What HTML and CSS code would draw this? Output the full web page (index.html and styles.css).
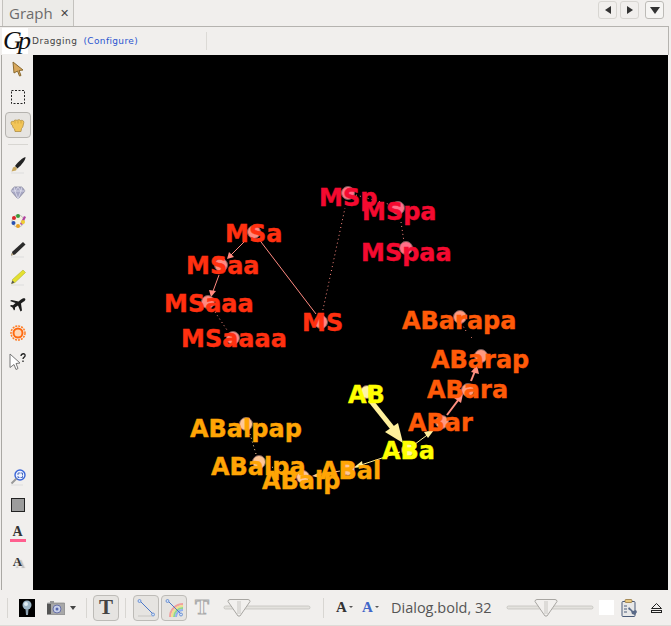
FILE: index.html

```html
<!DOCTYPE html>
<html>
<head>
    <title>Graph</title>
    <meta charset="UTF-8">
    <link rel="stylesheet" href="styles.css">
</head>
<body>
    <div class="tabbar">
        <div class="tab"><span class="tab-title">Graph</span><span class="tab-close">✕</span></div>
        <div class="tab-nav">
            <span class="nav-btn"><svg width="8" height="8" viewBox="0 0 8 8"><path d="M7 0v8L1 4z" fill="#333"/></svg></span>
            <span class="nav-btn"><svg width="8" height="8" viewBox="0 0 8 8"><path d="M1 0v8l6-4z" fill="#333"/></svg></span>
            <span class="nav-btn nav-menu"><svg width="10" height="8" viewBox="0 0 10 8"><path d="M0 1h10L5 8z" fill="#333"/></svg></span>
        </div>
    </div>

    <div class="infobar">
        <div class="logo">Gp</div>
        <span class="mode">Dragging</span>
        <a class="configure">(Configure)</a>
        <span class="infobar-sep"></span>
    </div>

    <div class="main">
        <div class="side">
            <span class="tool"><svg width="14" height="16" viewBox="0 0 14 16"><path d="M2 1l10 8-4 .5 2 5-1.500.5-2-5L3 12z" fill="#d9a85c" stroke="#8a6a30"/></svg></span>
            <span class="tool"><svg width="14" height="14" viewBox="0 0 14 14"><rect x=".5" y=".5" width="13" height="13" fill="none" stroke="#222" stroke-dasharray="2 1.500"/></svg></span>
            <span class="tool tool-on"><svg width="15" height="13" viewBox="0 0 15 13"><path d="M1 3.500C1 2.500 2.500 2 3.500 2.500 4 1 6 .5 7 1.500 8 .5 10 .5 10.500 1.500 12 1 14 1.500 13.800 3.500L13 7c-.3 1.500-1 2-1.500 2.500L11 12.500H5L4.500 10C3 9 2.500 7.500 2.500 6.500 1.500 6 1 5 1 3.500z" fill="#f2c558" stroke="#a8853a" stroke-width=".7"/><path d="M5 2v2.500M8 2v2.500M11 2v2.500" stroke="#c89c38" stroke-width=".7"/></svg></span>
            <span class="side-sep"></span>
            <span class="tool"><svg width="16" height="17" viewBox="0 0 16 17"><path d="M15.500 0c.3 3-4 8-8 11.500l-2.500-2.500C8 5 12 1 15.500 0z" fill="#222"/><path d="M5 9.500l2 2-1 2-4.500 1 1.500-4z" fill="#c9a860"/><path d="M1 16h13" stroke="#ddd"/></svg></span>
            <span class="tool"><svg width="16" height="14" viewBox="0 0 16 14"><path d="M4 1h8l3 4-7 8-7-8z" fill="#a8a8c4" stroke="#85859c" stroke-width=".8"/><path d="M1 5h14M5 5l3 8 3-8M4 1l1 4 3-4 3 4 1-4" fill="none" stroke="#e6e6f2" stroke-width=".7"/></svg></span>
            <span class="tool"><svg width="16" height="16" viewBox="0 0 16 16"><circle cx="8" cy="8" r="6" fill="#f4f0e0" stroke="#999" stroke-width=".6"/><circle cx="4" cy="5" r="2" fill="#d8262c"/><circle cx="8" cy="3" r="2" fill="#3a9a3a"/><circle cx="3.500" cy="10" r="2" fill="#2850b0"/><circle cx="8" cy="13" r="2" fill="#e8a020"/><path d="M10 11l4-8 2 1-4 8z" fill="#b040a0"/><circle cx="13" cy="9" r="2" fill="#f0d030"/></svg></span>
            <span class="tool"><svg width="16" height="17" viewBox="0 0 16 17"><path d="M13 1l2.500 2.500L5 13.500l-4 1L2.500 10.500z" fill="#2b2b2b"/><path d="M1 14.500l1-2.500 1.500 1.500z" fill="#d8c090"/><path d="M1 16h13" stroke="#ddd"/></svg></span>
            <span class="tool"><svg width="16" height="17" viewBox="0 0 16 17"><path d="M13 1l2.500 2.500L5 13.500l-3 1L2.500 10.500z" fill="#e4e030" stroke="#a8a820" stroke-width=".5"/><path d="M1 15l1.500-3.500L4.500 13.500z" fill="#555"/><path d="M1 16h13" stroke="#ddd"/></svg></span>
            <span class="tool"><svg width="16" height="14" viewBox="0 0 16 14"><path d="M15 .5c1 .8 0 2.500-2 3.500l-2 1.500 1 7-1.500 1-2.500-6-3 2 0 2-1 1-1.500-3L0 8l1-1 2 .3 2.500-2.300L0 3l1.500-1 7 1.500L11 1.500c2-1.500 3.200-1.500 4-1z" fill="#1c1c1c"/></svg></span>
            <span class="tool"><svg width="16" height="16" viewBox="0 0 16 16"><circle cx="8" cy="8" r="4.500" fill="#ffd8b8" stroke="#ff6a10" stroke-width="2"/><circle cx="8" cy="8" r="7" fill="none" stroke="#ff7a20" stroke-width="1.500" stroke-dasharray="2 1"/></svg></span>
            <span class="tool"><svg width="18" height="17" viewBox="0 0 18 17"><path d="M1 1l10 9-4 .5 2 5-2 1-2-5-4 3z" fill="#fff" stroke="#777"/><path d="M12 3c0-3 5-3 4 0-.3 1.200-2 1.500-2 3M14 7.500v1.500" fill="none" stroke="#222" stroke-width="1.300"/></svg></span>
            <span class="side-spacer"></span>
            <span class="tool"><svg width="16" height="17" viewBox="0 0 16 17"><circle cx="10" cy="6" r="5" fill="#eef2ff" stroke="#3a66d8" stroke-width="1.400"/><path d="M8 6V4h2M10.500 4H12.500V6M12.500 6.500V8.500h-2M9.500 8.500H8V7" fill="none" stroke="#2850b0" stroke-width=".8"/><path d="M6.500 9.500L1.500 14.500" stroke="#999" stroke-width="2"/><path d="M1 16h12" stroke="#ddd"/></svg></span>
            <span class="tool"><span class="square"></span></span>
            <span class="tool tool-a"><span class="glyph-a">A</span><span class="pink-bar"></span></span>
            <span class="tool"><span class="glyph-a glyph-shadow">A</span></span>
        </div>

        <svg class="canvas" viewBox="33 55 635 535">
            <g class="edges-red">
                <path d="M316 314L258 238"/>
                <path d="M245 241L229 257"/>
                <path d="M219 275L212 294"/>
                <path class="dots" d="M215 312L227 330"/>
                <path class="dots" d="M322 314L345 208"/>
                <path class="dots" d="M356 195L388 204"/>
                <path class="dots" d="M401 222L404 242"/>
                <polygon points="227,259 229,252 234,257"/>
                <polygon points="211,297 209,290 216,291"/>
            </g>
            <g class="edges-orange">
                <path class="thick" d="M447 415L459 399"/>
                <path class="thick" d="M471 381L475 371"/>
                <path class="dots" d="M472 338L470 336M466 331L463 326"/>
                <polygon points="463,394 461,403 454,398"/>
                <polygon points="477,365 479,374 471,372"/>
            </g>
            <g class="edges-yellow">
                <path class="huge" d="M370 400L394 430"/>
                <path d="M411 447L430 433"/>
                <path d="M400 452L358 466"/>
                <polygon points="403,443 385,432 398,423"/>
                <polygon points="434,430 428,438 424,432"/>
                <polygon points="353,468 362,461 363,467"/>
            </g>
            <g class="edges-pale">
                <path d="M340 471L316 475"/>
                <polygon points="312,476 320,472 320,478"/>
                <path class="dots" d="M296 474L268 466"/>
                <path class="dots" d="M256 454L250 434"/>
            </g>

            <g class="nodes">
                <circle class="n-red" cx="321" cy="322" r="6.500"/>
                <circle class="n-red" cx="254" cy="232" r="6.500"/>
                <circle class="n-red" cx="221" cy="265" r="6.500"/>
                <circle class="n-red" cx="208" cy="302" r="6.500"/>
                <circle class="n-red" cx="233" cy="338" r="6.500"/>
                <circle class="n-crimson" cx="348" cy="193" r="6.500"/>
                <circle class="n-crimson" cx="398" cy="208" r="6.500"/>
                <circle class="n-crimson" cx="406" cy="248" r="6.500"/>
                <circle class="n-orange" cx="460" cy="317" r="6.500"/>
                <circle class="n-orange" cx="481" cy="356" r="6.500"/>
                <circle class="n-orange" cx="468" cy="390" r="6.500"/>
                <circle class="n-orange" cx="442" cy="422" r="6.500"/>
                <circle class="n-yellow" cx="367" cy="392" r="6.500"/>
                <circle class="n-yellow" cx="408" cy="450" r="6.500"/>
                <circle class="n-amber" cx="348" cy="469" r="6.500"/>
                <circle class="n-amber" cx="303" cy="477" r="6.500"/>
                <circle class="n-amber" cx="259" cy="462" r="6.500"/>
                <circle class="n-amber" cx="246" cy="424" r="6.500"/>
            </g>

            <g class="labels">
                <text class="red" x="302" y="331">MS</text>
                <text class="red" x="225" y="242">MSa</text>
                <text class="red" x="186" y="274">MSaa</text>
                <text class="red" x="164" y="312">MSaaa</text>
                <text class="red" x="181" y="347">MSaaaa</text>
                <text class="crimson" x="319" y="206">MSp</text>
                <text class="crimson" x="362" y="220">MSpa</text>
                <text class="crimson" x="361" y="261">MSpaa</text>
                <text class="orange" x="402" y="329">ABarapa</text>
                <text class="orange" x="431" y="368">ABarap</text>
                <text class="orange" x="427" y="398">ABara</text>
                <text class="orange" x="408" y="431">ABar</text>
                <text class="yellow" x="348" y="403">AB</text>
                <text class="yellow" x="382" y="459">ABa</text>
                <text class="amber" x="320" y="479">ABal</text>
                <text class="amber" x="262" y="489">ABalp</text>
                <text class="amber" x="211" y="475">ABalpa</text>
                <text class="amber" x="190" y="437">ABalpap</text>
            </g>
        </svg>
    </div>

    <div class="bottom">
        <span class="bar-sep bar-sep-first"></span>
        <span class="bulb"><svg width="16" height="18" viewBox="0 0 16 18"><rect width="16" height="18" fill="#000"/><circle cx="8" cy="6" r="4.500" fill="#9fb8c8"/><circle cx="7" cy="5" r="2" fill="#e0ecf2"/><path d="M6.500 10h3l-.5 6H7z" fill="#8aa0b0"/></svg></span>
        <span class="camera"><svg width="18" height="14" viewBox="0 0 18 14"><rect x="0" y="2" width="18" height="12" rx="1" fill="#a8a8a8" stroke="#777" stroke-width=".6"/><rect x="0" y="3" width="4" height="10" fill="#555"/><rect x="3" y="0" width="4" height="2" fill="#999"/><circle cx="10" cy="8" r="4" fill="#c8d0e8" stroke="#6a72a8"/><circle cx="10" cy="8" r="1.500" fill="#5868b0"/></svg></span>
        <span class="caret"></span>
        <span class="bar-sep"></span>
        <span class="bar-btn bar-btn-t"><span class="glyph-t">T</span></span>
        <span class="bar-sep bar-sep-wide"></span>
        <span class="bar-btn"><svg width="18" height="18" viewBox="0 0 18 18"><path d="M3 2l13 13" stroke="#4c78c8"/><circle cx="2.500" cy="2" r="1.500" fill="#cfe0f8" stroke="#4c78c8" stroke-width=".7"/><circle cx="16" cy="15.500" r="1.500" fill="#cfe0f8" stroke="#4c78c8" stroke-width=".7"/><path d="M1 17h14" stroke="#c8c6c2"/></svg></span>
        <span class="bar-btn bar-btn-rainbow"><svg width="18" height="18" viewBox="0 0 18 18"><path d="M5 18A13 13 0 0 1 18 5" fill="none" stroke="#f0a0a0" stroke-width="2"/><path d="M7 18A11 11 0 0 1 18 7" fill="none" stroke="#f0e090" stroke-width="2"/><path d="M9 18A9 9 0 0 1 18 9" fill="none" stroke="#90d890" stroke-width="2"/><path d="M11 18A7 7 0 0 1 18 11" fill="none" stroke="#90b0f0" stroke-width="2"/><path d="M3 2l13 13" stroke="#4c78c8"/><circle cx="2.500" cy="2" r="1.500" fill="#cfe0f8" stroke="#4c78c8" stroke-width=".7"/><circle cx="16" cy="15.500" r="1.500" fill="#cfe0f8" stroke="#4c78c8" stroke-width=".7"/></svg></span>
        <span class="glyph-t glyph-t-off">T</span>
        <svg class="slider slider-one" width="88" height="20" viewBox="0 0 88 20"><rect x="1" y="8" width="86" height="3" rx="1.500" fill="#e4e2de" stroke="#bdbbb7" stroke-width=".7"/><path d="M5 3.500a2 2 0 0 1 2-2h18a2 2 0 0 1 2 2L17 18h-2z" fill="#f2f0ee" stroke="#a8a6a2"/><path d="M15 3v13M17 3v13" stroke="#c8c6c2"/></svg>
        <span class="bar-sep bar-sep-mid"></span>
        <span class="font-btn"><span class="glyph-a">A</span><span class="small-caret"></span></span>
        <span class="font-btn font-btn-blue"><span class="glyph-a">A</span><span class="small-caret"></span></span>
        <span class="font-name">Dialog.bold, 32</span>
        <svg class="slider slider-two" width="88" height="20" viewBox="0 0 88 20"><rect x="1" y="8" width="86" height="3" rx="1.500" fill="#e4e2de" stroke="#bdbbb7" stroke-width=".7"/><path d="M29 3.500a2 2 0 0 1 2-2h18a2 2 0 0 1 2 2L41 18h-2z" fill="#f2f0ee" stroke="#a8a6a2"/><path d="M39 3v13M41 3v13" stroke="#c8c6c2"/></svg>
        <span class="swatch"></span>
        <span class="clip"><svg width="17" height="18" viewBox="0 0 17 18"><rect x="1" y="2.500" width="13" height="15" rx="1" fill="#e8e8e8" stroke="#4a5a78"/><rect x="4" y=".5" width="7" height="3" rx="1" fill="#e8c880" stroke="#8a6a30" stroke-width=".7"/><path d="M3 7h3M3 10h3M3 13h3" stroke="#4a5a78"/><path d="M8 8l4 4 3-1 1 2-2 3-3-1-1-3-3-2z" fill="#5a6a88"/></svg></span>
        <span class="eject"><svg width="11" height="10" viewBox="0 0 11 10"><path d="M5.500 .5l5 5h-10z" fill="none" stroke="#222"/><rect x=".5" y="7.500" width="10" height="2" fill="none" stroke="#222"/></svg></span>
    </div>
</body>
</html>
```

FILE: styles.css

```css
html, body {
    margin: 0;
    padding: 0;
}
body {
    width: 671px;
    height: 626px;
    overflow: hidden;
    display: flex;
    flex-direction: column;
    background-color: #f1efed;
    font-family: "Open Sans", sans-serif;
    color: #333;
}

/* tab strip */
.tabbar {
    height: 27px;
    flex: none;
    display: flex;
    justify-content: space-between;
    box-sizing: border-box;
    padding-left: 2px;
    border-bottom: 1px solid #b5b3af;
    margin-right: 2px;
}
.tab {
    width: 72px;
    height: 26px;
    box-sizing: border-box;
    border: 1px solid #c4c2be;
    border-width: 0 1px 0 1px;
    background-color: #ecebe8;
    display: flex;
    align-items: center;
    padding-left: 6px;
}
.tab-title {
    font-size: 15px;
    color: #6c6c6c;
    width: 51px;
}
.tab-close {
    font-size: 11px;
    font-family: "DejaVu Sans", sans-serif;
    font-weight: bold;
    color: #444;
}
.tab-nav {
    display: flex;
    gap: 3px;
    padding: 1px 5px 0 0;
}
.nav-btn {
    width: 19px;
    height: 18px;
    box-sizing: border-box;
    border: 1px solid #d8d6d2;
    border-radius: 3px;
    display: flex;
    align-items: center;
    justify-content: center;
}
.nav-menu {
    margin-left: 3px;
    border-color: #bdbbb7;
    background-color: #f6f5f3;
}

/* info line */
.infobar {
    height: 28px;
    flex: none;
    display: flex;
    align-items: center;
    margin-right: 2px;
    border-right: 1px solid #b5b3af;
}
.logo {
    width: 26px;
    height: 26px;
    margin-left: 2px;
    background-color: #fff;
    color: #111;
    font-family: "Liberation Serif", serif;
    font-style: italic;
    font-size: 26px;
    line-height: 25px;
    text-align: center;
    letter-spacing: -4px;
}
.mode {
    font-family: "DejaVu Sans", sans-serif;
    font-size: 9px;
    letter-spacing: .5px;
    color: #444;
    margin-left: 4px;
}
.configure {
    font-family: "DejaVu Sans", sans-serif;
    font-size: 9px;
    letter-spacing: .35px;
    color: #2a55d0;
    margin-left: 6px;
}
.infobar-sep {
    width: 1px;
    height: 18px;
    background-color: #dcdad6;
    margin-left: 68px;
}

/* tools + canvas */
.main {
    flex: none;
    height: 535px;
    display: flex;
}
.side {
    width: 32px;
    margin-left: 1px;
    border-left: 1px solid #aaa8a4;
    box-sizing: border-box;
    display: flex;
    flex-direction: column;
    align-items: center;
    padding-bottom: 15px;
}
.tool {
    width: 26px;
    height: 28px;
    flex: none;
    display: flex;
    align-items: center;
    justify-content: center;
}
.tool-on {
    height: 26px;
    margin: 1px 0;
    box-sizing: border-box;
    border: 1px solid #b5b3af;
    border-radius: 4px;
    background-color: #e6e4e1;
}
.side-sep {
    width: 20px;
    height: 1px;
    flex: none;
    margin: 5px 0 6px;
    background-color: #d8d6d2;
}
.side-spacer {
    flex: 1;
}
.square {
    width: 12px;
    height: 12px;
    background-color: #9c9c9c;
    border: 1px solid #222;
}
.tool-a {
    flex-direction: column;
}
.glyph-a {
    font-family: "Liberation Serif", serif;
    font-weight: bold;
    font-size: 14px;
    line-height: 13px;
    color: #333;
}
.glyph-shadow {
    font-size: 13px;
    text-shadow: 3px 2px 1px #bbb;
}
.pink-bar {
    width: 16px;
    height: 3px;
    margin-top: 1px;
    background-color: #ff5f8f;
}
.canvas {
    width: 635px;
    height: 535px;
    flex: none;
    background-color: #000;
    display: block;
}

/* graph */
.edges-red, .edges-orange, .edges-yellow, .edges-pale {
    fill: none;
    stroke-width: 1;
}
.edges-red { stroke: #ff8a80; }
.edges-orange { stroke: #ff9080; }
.edges-yellow { stroke: #fff09c; }
.edges-pale { stroke: #ffcf9c; }
.edges-red polygon { fill: #ff8a80; stroke: none; }
.edges-orange polygon { fill: #ff9080; stroke: none; }
.edges-yellow polygon { fill: #fff09c; stroke: none; }
.edges-pale polygon { fill: #ffcf9c; stroke: none; }
.dots {
    stroke-dasharray: 1 3;
}
.thick {
    stroke-width: 2;
}
.huge {
    stroke-width: 5;
}
.nodes circle {
    stroke: #7a5a58;
    stroke-width: 1;
}
.n-red { fill: #ff8a80; }
.n-crimson { fill: #ff7088; }
.n-orange { fill: #ff9a80; }
.n-yellow { fill: #fff4a8; }
.n-amber { fill: #ffc898; }
.labels text {
    font-family: "DejaVu Sans", sans-serif;
    font-weight: bold;
    font-size: 24px;
    stroke-width: .4;
}
.red { fill: #ff3010; stroke: #ff3010; }
.crimson { fill: #f40a30; stroke: #f40a30; }
.orange { fill: #ff5a08; stroke: #ff5a08; }
.yellow { fill: #ffff00; stroke: #ffff00; }
.amber { fill: #ffa505; stroke: #ffa505; }

/* bottom toolbar */
.bottom {
    flex: 1;
    display: flex;
    align-items: center;
    box-sizing: border-box;
    border-bottom: 1px solid #dddbd7;
}
.bar-sep {
    width: 1px;
    height: 20px;
    flex: none;
    margin: 0 6px;
    background-color: #d8d6d2;
}
.bar-sep-first {
    margin: 0 11px 0 7px;
}
.bar-sep-wide {
    margin-right: 7px;
}
.bar-sep-mid {
    margin: 0 12px 0 12px;
}
.bulb {
    width: 16px;
    height: 18px;
    display: flex;
}
.camera {
    margin-left: 12px;
    display: flex;
}
.caret {
    width: 0;
    height: 0;
    margin: 0 4px 0 5px;
    border: 3px solid transparent;
    border-top: 4px solid #444;
    border-bottom: 0;
}
.bar-btn {
    width: 26px;
    height: 26px;
    flex: none;
    box-sizing: border-box;
    border: 1px solid #bdbbb7;
    border-radius: 4px;
    background-color: #e6e4e1;
    display: flex;
    align-items: center;
    justify-content: center;
}
.bar-btn-rainbow {
    margin-left: 2px;
}
.glyph-t {
    font-family: "Liberation Serif", serif;
    font-weight: bold;
    font-size: 21px;
    line-height: 21px;
    color: #444;
}
.glyph-t-off {
    width: 16px;
    margin: 0 13px 0 7px;
    text-align: center;
    color: #f6f5f3;
    -webkit-text-stroke: 1px #aaa;
}
.slider {
    flex: none;
    display: block;
}
.font-btn {
    width: 26px;
    display: flex;
    align-items: flex-start;
}
.font-btn .glyph-a {
    font-size: 15px;
    line-height: 15px;
}
.font-btn-blue {
    width: 29px;
}
.font-btn-blue .glyph-a {
    color: #3f66c8;
}
.small-caret {
    width: 0;
    height: 0;
    margin: 6px 0 0 2px;
    border: 2px solid transparent;
    border-top: 2px solid #555;
    border-bottom: 0;
}
.font-name {
    width: 115px;
    flex: none;
    font-size: 14.5px;
    color: #555;
    white-space: nowrap;
}
.swatch {
    width: 15px;
    height: 15px;
    margin-left: 5px;
    background-color: #fff;
    flex: none;
}
.clip {
    margin-left: 7px;
    display: flex;
}
.eject {
    margin-left: 13px;
    display: flex;
}
```
